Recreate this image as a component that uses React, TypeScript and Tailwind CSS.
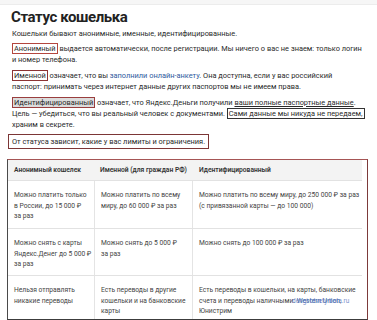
const rows = [
  {
    a: ["Можно платить только", "в России, до 15 000 ₽", "за раз"],
    b: ["Можно платить по всему", "миру, до 60 000 ₽ за раз"],
    c: ["Можно платить по всему миру, до 250 000 ₽ за раз", "(с привязанной карты — до 100 000)"],
    h: "h-[48px]",
  },
  {
    a: ["Можно снять с карты", "Яндекс.Денег до 5 000 ₽", "за раз"],
    b: ["Можно снять до 5 000 ₽", "за раз"],
    c: ["Можно снять до 100 000 ₽ за раз"],
    h: "h-[47px]",
  },
];

function Cell({ lines, last }: { lines: React.ReactNode[]; last?: boolean }) {
  return (
    <div className={`pt-[9px] px-[6px] ${last ? "" : "border-r border-[#e4e4e4]"}`}>
      {lines.map((l, i) => (
        <div key={i} className="whitespace-nowrap">
          {l}
        </div>
      ))}
    </div>
  );
}

export default function App() {
  return (
    <div
      className="relative h-[320px] w-[377px] overflow-hidden bg-white text-[#2a2a2a]"
      style={{ fontFamily: 'Roboto, "Liberation Sans", Arial, sans-serif' }}
    >
      <div className="h-[5px] border-b border-[#ececec] bg-[#f6f6f6]" />

      <h1 className="pl-[11px] pt-[3px] text-[15px] font-bold leading-[19px] tracking-[-0.4px] text-[#222]">
        Статус кошелька
      </h1>

      <div className="whitespace-nowrap pl-[12px] text-[7.4px] leading-[11px]">
        <p className="mt-[1px]">Кошельки бывают анонимные, именные, идентифицированные.</p>

        <p className="mt-[4px]">
          <span className="border border-[#b4463e] px-[1px]">Анонимный</span> выдается автоматически, после
          регистрации. Мы ничего о вас не знаем: только логин
          <br />и номер телефона.
        </p>

        <p className="mt-[5px]">
          <span className="border border-[#8c3434] px-[1px]">Именной</span> означает, что вы{" "}
          <span className="text-[#2f5a9e]">заполнили онлайн-анкету</span>. Она доступна, если у вас российский
          <br />
          паспорт: принимать через интернет данные других паспортов мы не имеем права.
        </p>

        <p className="mt-[5px]">
          <span className="border border-[#9a3e3e] bg-[#dcdcdc] px-[1px]">Идентифицированный</span> означает, что
          Яндекс.Деньги получили <span className="underline">ваши полные паспортные данные</span>.
          <br />
          Цель — убедиться, что вы реальный человек с документами.{" "}
          <span className="border border-[#333] px-[1px]">Сами данные мы никуда не передаем,</span>
          <br />
          храним в секрете.
        </p>

        <p className="-ml-[4px] mt-[4px] inline-block border border-[#7c3636] px-[3px] py-[1px]">
          От статуса зависит, какие у вас лимиты и ограничения.
        </p>
      </div>

      <div className="ml-[7px] mt-[10px] w-[361px] border border-t-[#a65555] border-r-[#7c3a3a] border-b-[#3c3c3c] border-l-[#4a4a4a] pr-[5px] text-[6.7px] leading-[10.5px] text-[#444]">
        <div className="grid h-[21px] grid-cols-[87px_98px_1fr] items-center whitespace-nowrap border-b border-[#e2e2e2] bg-[#f3f3f3] font-semibold text-[#333]">
          <div className="px-[6px]">Анонимный кошелек</div>
          <div className="px-[5px]">Именной (для граждан РФ)</div>
          <div className="px-[6px]">Идентифицированный</div>
        </div>

        {rows.map((r, i) => (
          <div key={i} className={`grid ${r.h} grid-cols-[87px_98px_1fr] border-b border-[#e2e2e2]`}>
            <Cell lines={r.a} />
            <Cell lines={r.b} />
            <Cell lines={r.c} last />
          </div>
        ))}

        <div className="grid h-[43px] grid-cols-[87px_98px_1fr]">
          <Cell lines={["Нельзя отправлять", "никакие переводы"]} />
          <Cell lines={["Есть переводы в другие", "кошельки и на банковские", "карты"]} />
          <Cell
            last
            lines={[
              "Есть переводы в кошельки, на карты, банковские",
              <>
                счета и переводы наличными: <span className="text-[#2f5a9e]">Western Union</span>,
              </>,
              "Юнистрим",
            ]}
          />
        </div>
      </div>

      <div className="absolute left-[292px] top-[297px] text-[6.5px] text-[#5a78c0] opacity-80">
        dengi-otvety-beta.ru
      </div>
    </div>
  );
}
